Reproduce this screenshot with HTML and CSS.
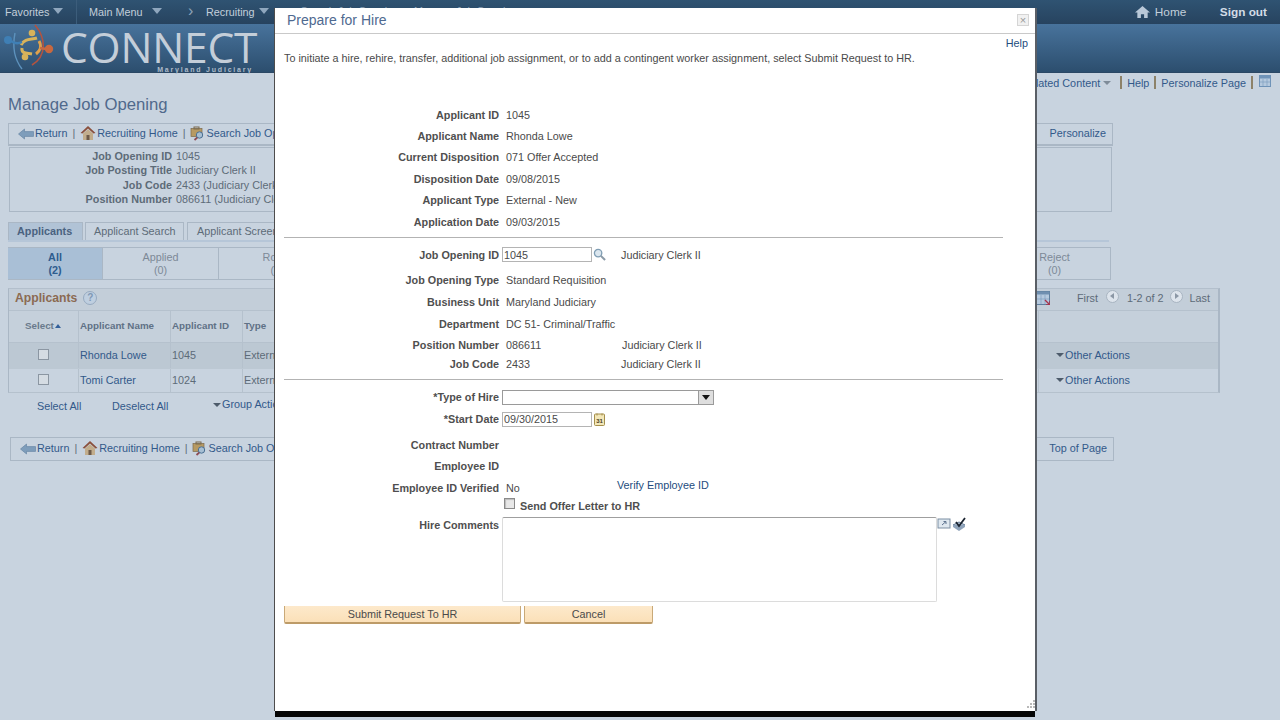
FILE: index.html
```html
<!DOCTYPE html>
<html lang="en">
<head>
<meta charset="utf-8">
<title>Prepare for Hire</title>
<link rel="stylesheet" href="styles.css">
</head>
<body>
<svg class="defs" width="0" height="0" aria-hidden="true">
  <defs>
    <symbol id="house" viewBox="0 0 16 16">
      <path d="M8 1 L0.5 8 L2.5 8.5 L8 3.6 L13.5 8.5 L15.5 8 Z" fill="#8a4f3c"/>
      <path d="M3 8.5 L8 4.2 L13 8.5 V15 H3 Z" fill="#c2ad8c"/>
      <rect x="6.5" y="10" width="3" height="5" fill="#6d5a48"/>
    </symbol>
    <symbol id="back" viewBox="0 0 16 12">
      <path d="M0.5 6 L6.5 1 V3.6 H15.5 V8.4 H6.5 V11 Z" fill="#7e9dbb" stroke="#5f7f9f" stroke-width=".6"/>
    </symbol>
    <symbol id="search-job" viewBox="0 0 15 15">
      <rect x="1" y="2.5" width="11" height="8" fill="#b79a63" stroke="#7b6a4e" stroke-width=".7"/>
      <rect x="4" y="1" width="5" height="2" fill="none" stroke="#7b6a4e"/>
      <circle cx="9.5" cy="9" r="3.2" fill="#a7bfd3" stroke="#4a6f93"/>
      <path d="M7.3 11.5 L4.5 14" stroke="#8c4a52" stroke-width="1.8"/>
    </symbol>
  </defs>
</svg>

<header class="topbar">
  <nav class="nav-left">
    <span class="nav-item nav-fav">Favorites<i class="tri"></i></span>
    <span class="nav-item nav-main">Main Menu<i class="tri"></i></span>
    <span class="nav-chev">&#8250;</span>
    <span class="nav-item nav-rec">Recruiting<i class="tri"></i></span>
    <span class="nav-crumb">Search Job Openings &#8250; Manage Job Opening</span>
  </nav>
  <div class="nav-right">
    <svg class="home-ico" viewBox="0 0 16 14"><path d="M8 0.5 L0 7.5 H2.5 V13.5 H6.3 V9.5 H9.7 V13.5 H13.5 V7.5 H16 Z" fill="#b9c8d8"/></svg>
    <span class="home-txt">Home</span>
    <span class="signout">Sign out</span>
  </div>
</header>

<div class="banner">
  <svg class="logo-mark" viewBox="0 0 56 50">
    <path d="M33 1 C44 14 45 32 30 41" fill="none" stroke="#b3533f" stroke-width="1.6"/>
    <path d="M13 9 C10 24 13 36 20 45" fill="none" stroke="#5d92bd" stroke-width="1.4"/>
    <circle cx="6" cy="16" r="4" fill="#3f7fb5"/>
    <circle cx="47" cy="25" r="4.2" fill="#c8683f"/>
    <circle cx="30" cy="9" r="3.3" fill="#d9b35a"/>
    <circle cx="23" cy="33" r="3.3" fill="#d9b35a"/>
    <path d="M19 21 C23 14 29 16 35 14" fill="none" stroke="#d9b35a" stroke-width="3"/>
    <path d="M20 24 C19 30 25 29 30 30" fill="none" stroke="#d9b35a" stroke-width="3"/>
    <path d="M37 17 C40 22 38 27 34 30" fill="none" stroke="#dfa14c" stroke-width="3"/>
    <path d="M38 24 L44 25" stroke="#c8683f" stroke-width="2.4"/>
    <path d="M9 17 C13 20 16 20 20 18" fill="none" stroke="#3f7fb5" stroke-width="2.4"/>
  </svg>
  <div class="logo-text">
    <span class="logo-name">CONNECT</span>
    <span class="logo-sub">Maryland Judiciary</span>
  </div>
</div>

<main class="page">
  <div class="pagelinks">
    <span class="plink">Related Content<i class="tri-sm"></i></span>
    <span class="psep"></span><span class="plink">Help</span>
    <span class="psep"></span><span class="plink">Personalize Page</span>
    <span class="psep"></span>
    <svg class="cal-ico" viewBox="0 0 12 12"><rect x=".5" y=".5" width="11" height="11" fill="#b5c9de" stroke="#6f93b8"/><rect x=".5" y=".5" width="11" height="3" fill="#6f93b8"/><path d="M4 4V11M8 4V11M1 7H11" stroke="#7f9fc0" stroke-width=".7"/></svg>
  </div>

  <h1 class="page-title">Manage Job Opening</h1>

  <div class="toolbar">
    <span class="tool"><svg class="ti-back"><use href="#back"/></svg>Return</span><span class="bar">|</span>
    <span class="tool"><svg class="ti-house"><use href="#house"/></svg>Recruiting Home</span><span class="bar">|</span>
    <span class="tool"><svg class="ti-search"><use href="#search-job"/></svg>Search Job Openings</span>
    <span class="tool tool-end">Personalize</span>
  </div>

  <div class="infobox">
    <div class="ib-l">Job Opening ID</div><div>1045</div>
    <div class="ib-l">Job Posting Title</div><div>Judiciary Clerk II</div>
    <div class="ib-l">Job Code</div><div>2433 (Judiciary Clerk II)</div>
    <div class="ib-l">Position Number</div><div>086611 (Judiciary Clerk II)</div>
  </div>

  <div class="tabs">
    <span class="tab tab-on">Applicants</span>
    <span class="tab tab-search">Applicant Search</span>
    <span class="tab">Applicant Screening</span>
  </div>

  <div class="status">
    <div class="st st-all">All<br>(2)</div>
    <div class="st st-applied">Applied<br>(0)</div>
    <div class="st st-route">Route<br>(0)</div>
    <div class="st st-reject">Reject<br>(0)</div>
  </div>

  <section class="grid">
    <div class="grid-title">
      <span class="gt-name">Applicants</span>
      <span class="gt-help">?</span>
      <span class="gt-right">
        <svg class="gt-xls" viewBox="0 0 14 14"><rect x=".5" y=".5" width="13" height="13" fill="#b5c9de" stroke="#5f7f9f"/><rect x=".5" y=".5" width="13" height="3" fill="#6f8fb0"/><path d="M5 4V13M9 4V13M1 8H13" stroke="#7f9fc0" stroke-width=".7"/><path d="M9 9 L14 14 M14 10 V14 H10" stroke="#a8324a" stroke-width="1.4" fill="none"/></svg>
        <span class="gt-first">First</span>
        <i class="pg pg-prev"></i>
        <span class="gt-count">1-2 of 2</span>
        <i class="pg pg-next"></i>
        <span>Last</span>
      </span>
    </div>
    <div class="grow ghead">
      <div class="gc gc-sel">Select<i class="sort"></i></div>
      <div class="gc">Applicant Name</div>
      <div class="gc">Applicant ID</div>
      <div class="gc">Type</div>
      <div class="gc gc-last"></div>
    </div>
    <div class="grow gr1">
      <div class="gc gc-chk"><i class="chk"></i></div>
      <div class="gc link">Rhonda Lowe</div>
      <div class="gc">1045</div>
      <div class="gc">External - New</div>
      <div class="gc gc-last link"><i class="tri-dk"></i>Other Actions</div>
    </div>
    <div class="grow gr2">
      <div class="gc gc-chk"><i class="chk"></i></div>
      <div class="gc link">Tomi Carter</div>
      <div class="gc">1024</div>
      <div class="gc">External - New</div>
      <div class="gc gc-last link"><i class="tri-dk"></i>Other Actions</div>
    </div>
  </section>

  <div class="selrow">
    <span class="link sel-all">Select All</span>
    <span class="link sel-none">Deselect All</span>
    <span class="link sel-group"><i class="tri-dk"></i>Group Actions</span>
  </div>

  <div class="toolbar toolbar-b">
    <span class="tool"><svg class="ti-back"><use href="#back"/></svg>Return</span><span class="bar">|</span>
    <span class="tool"><svg class="ti-house"><use href="#house"/></svg>Recruiting Home</span><span class="bar">|</span>
    <span class="tool"><svg class="ti-search"><use href="#search-job"/></svg>Search Job Openings</span>
    <span class="tool tool-end">Top of Page</span>
  </div>
</main>

<div class="modal" role="dialog">
  <div class="m-head">
    <span class="m-title">Prepare for Hire</span>
    <span class="m-close">&#215;</span>
  </div>
  <div class="m-body">
    <div class="m-help"><span class="mlink">Help</span></div>
    <p class="m-intro">To initiate a hire, rehire, transfer, additional job assignment, or to add a contingent worker assignment, select Submit Request to HR.</p>

    <div class="fgroup fg-1">
      <div class="frow h21"><label>Applicant ID</label><span>1045</span></div>
      <div class="frow h21"><label>Applicant Name</label><span>Rhonda Lowe</span></div>
      <div class="frow h22"><label>Current Disposition</label><span>071 Offer Accepted</span></div>
      <div class="frow h21"><label>Disposition Date</label><span>09/08/2015</span></div>
      <div class="frow h22"><label>Applicant Type</label><span>External - New</span></div>
      <div class="frow h21"><label>Application Date</label><span>09/03/2015</span></div>
    </div>
    <hr class="rule rule-1">

    <div class="fgroup">
      <div class="frow h25 row-job"><label>Job Opening ID</label>
        <span class="fval"><input class="txt" type="text" value="1045"><svg class="lens" viewBox="0 0 14 14"><circle cx="5.5" cy="5.5" r="4" fill="#dbe6ee" stroke="#7f9db3" stroke-width="1.4"/><path d="M8.5 8.5 L13 13" stroke="#8a9aa6" stroke-width="2.2"/></svg><span class="desc">Judiciary Clerk II</span></span>
      </div>
      <div class="frow h22"><label>Job Opening Type</label><span>Standard Requisition</span></div>
      <div class="frow h22"><label>Business Unit</label><span>Maryland Judiciary</span></div>
      <div class="frow h21"><label>Department</label><span>DC 51- Criminal/Traffic</span></div>
      <div class="frow h20 row-pos"><label>Position Number</label><span class="fval"><span class="code">086611</span><span class="desc2">Judiciary Clerk II</span></span></div>
      <div class="frow h18"><label>Job Code</label><span class="fval"><span class="code">2433</span><span class="desc3">Judiciary Clerk II</span></span></div>
    </div>
    <hr class="rule rule-2">

    <div class="fgroup">
      <div class="frow h22"><label>*Type of Hire</label>
        <span class="sel"><i class="sel-btn"></i></span>
      </div>
      <div class="frow h22 gap-b"><label>*Start Date</label>
        <span class="fval"><input class="txt" type="text" value="09/30/2015"><svg class="cal" viewBox="0 0 11 13"><rect x=".5" y="1" width="10" height="11.5" rx="1" fill="#f3e7b8" stroke="#a58f4c"/><path d="M3 2.5V.5M8 2.5V.5" stroke="#a58f4c"/><text x="5.5" y="10" class="cal-t" text-anchor="middle">31</text></svg></span>
      </div>
      <div class="frow h21"><label>Contract Number</label></div>
      <div class="frow h22"><label>Employee ID</label></div>
      <div class="frow h22"><label>Employee ID Verified</label>
        <span class="fval"><span class="no">No</span><span class="mlink vlink">Verify Employee ID</span></span>
      </div>
      <div class="frow h16 row-offer"><label></label>
        <span class="offer"><i class="chk2"></i><b>Send Offer Letter to HR</b></span>
      </div>
      <div class="frow comments"><label>Hire Comments</label>
        <span class="fval fval-top"><span class="ta"></span>
          <svg class="ta-exp" viewBox="0 0 14 12"><rect x="1" y="1" width="12" height="9" fill="#dfe8f0" stroke="#7c8fa3"/><path d="M5 7 L9 3.5 M6.5 3.5 H9 V6" stroke="#5f7490" fill="none"/></svg>
          <svg class="ta-spell" viewBox="0 0 14 14"><path d="M1 8 L7 5 L13 8 L7 12 Z" fill="#b8c8da" stroke="#647a94"/><path d="M1 8 V10 L7 14 L13 10 V8" fill="#8fa3ba"/><path d="M4 5 L7 9 L13 1" fill="none" stroke="#1b2430" stroke-width="1.8"/></svg>
        </span>
      </div>
    </div>

    <div class="m-actions">
      <button class="btn btn-submit" type="button">Submit Request To HR</button>
      <button class="btn btn-cancel" type="button">Cancel</button>
    </div>
  </div>
  <svg class="grip" viewBox="0 0 9 9"><path d="M7 0h2v2H7zM4 3h2v2H4zM7 3h2v2H7zM1 6h2v2H1zM4 6h2v2H4zM7 6h2v2H7z" fill="#b9b9b9"/></svg>
</div>
</body>
</html>
```

FILE: styles.css
```css
* { box-sizing: border-box; }
html, body { margin: 0; height: 100%; }
body {
  position: relative;
  width: 1280px;
  height: 720px;
  overflow: hidden;
  background: #c8d3df;
  font-family: "Liberation Sans", Arial, sans-serif;
  font-size: 10.8px;
  color: #5d6b78;
}
.defs { position: absolute; }
i { display: inline-block; font-style: normal; }

/* top navigation */
.topbar {
  height: 24px;
  display: flex;
  justify-content: space-between;
  background: linear-gradient(#2f5372, #27435f);
  color: #c3cfdb;
  font-size: 10.8px;
  line-height: 22px;
}
.nav-left { display: flex; }
.nav-item { display: flex; align-items: center; }
.nav-fav { width: 77px; padding-left: 5px; border-right: 1px solid #3c5d7b; }
.nav-fav .tri { margin-left: 4px; }
.nav-main { margin-left: 12px; width: 99px; }
.nav-main .tri { margin-left: 10px; }
.nav-chev { width: 18px; color: #8ea3b8; font-size: 16px; }
.nav-rec .tri { margin-left: 4px; }
.nav-crumb { margin-left: 32px; height: 8px; overflow: hidden; color: #8ea3b8; white-space: nowrap; }
.tri {
  width: 0; height: 0;
  border-left: 5px solid transparent;
  border-right: 5px solid transparent;
  border-top: 6px solid #8fa7be;
  margin-top: -3px;
}
.nav-right { display: flex; align-items: center; padding-right: 13px; font-size: 11.8px; }
.home-ico { width: 15px; height: 14px; }
.home-txt { margin-left: 5px; width: 65px; }
.signout { font-weight: bold; color: #d3dce6; }

/* banner */
.banner {
  height: 49px;
  display: flex;
  background: linear-gradient(#48739c, #2c4e6e);
  border-bottom: 1px solid #2b4865;
}
.logo-mark { width: 56px; height: 50px; margin-left: 2px; flex: none; }
.logo-text { position: relative; margin-left: 3px; width: 200px; }
.logo-name {
  display: block;
  margin-top: 8px;
  font-family: "Open Sans", sans-serif;
  font-size: 42.5px;
  font-weight: 500;
  line-height: 30px;
  color: #c4ced9;
  letter-spacing: -0.2px;
}
.logo-sub {
  position: absolute;
  right: 8px;
  top: 41px;
  font-size: 7px;
  line-height: 9px;
  font-weight: bold;
  letter-spacing: 1.8px;
  color: #aebbc9;
  white-space: nowrap;
}

/* page */
.page { padding-left: 8px; }
.link { color: #32598a; }
.pagelinks {
  height: 19px;
  display: flex;
  justify-content: flex-end;
  align-items: center;
  padding-right: 9px;
  color: #32598a;
}
.plink { display: flex; align-items: center; }
.tri-sm {
  width: 0; height: 0; margin-left: 3px;
  border-left: 4px solid transparent;
  border-right: 4px solid transparent;
  border-top: 4px solid #7f8c99;
}
.psep { width: 2px; height: 13px; background: #8d8269; margin: 0 5px; }
.plink:first-child + .psep { margin-left: 9px; }
.cal-ico { width: 12px; height: 12px; margin-left: 1px; margin-top: -3px; }
.page-title {
  margin: 0;
  height: 30px;
  padding-top: 3px;
  font-size: 16.7px;
  line-height: 20px;
  font-weight: normal;
  color: #50698c;
}
.toolbar {
  width: 1105px;
  height: 23px;
  display: flex;
  align-items: center;
  padding: 0 6px 2px 9px;
  border: 1px solid #aab7c5;
  border-bottom-width: 2px;
  color: #32598a;
  white-space: nowrap;
  margin-top: 1px;
}
.tool { display: flex; align-items: center; }
.tool-end { margin-left: auto; }
.bar { margin: 0 5px; color: #5d6b78; }
.ti-back { width: 16px; height: 12px; margin-right: 1px; margin-top: 2px; }
.ti-house { width: 16px; height: 16px; margin-right: 1px; }
.ti-search { width: 15px; height: 15px; margin-right: 1px; }
.infobox {
  width: 1103px;
  height: 65px;
  margin: 1px 0 0 1px;
  border: 1px solid #aab7c5;
  padding-top: 1px;
  display: grid;
  grid-template-columns: 162px 1fr;
  column-gap: 4px;
  grid-auto-rows: 14.4px;
  line-height: 14px;
}
.ib-l { text-align: right; font-weight: bold; }
.tabs {
  width: 1101px;
  margin-top: 10px;
  height: 20px;
  display: flex;
  gap: 2px;
  border-bottom: 2px solid #b6c6d8;
  white-space: nowrap;
}
.tab {
  padding: 0 9px;
  line-height: 17px;
  height: 18px;
  border: 1px solid #aab7c5;
  border-bottom: none;
}
.tab-on { width: 75px; font-weight: bold; background: #b1c3d6; color: #4a6280; padding: 0 8px; }
.tab-search { width: 99px; margin-right: 1px; padding: 0 8px; }
.status {
  width: 1103px;
  height: 33px;
  margin-top: 5px;
  display: flex;
  border: 1px solid #aab7c5;
  text-align: center;
  line-height: 12.5px;
}
.st { padding-top: 3px; border-right: 1px solid #aab7c5; color: #7d8997; }
.st-all { width: 95px; background: #a9bfd6; color: #2e5c8e; font-weight: bold; margin-left: -1px; }
.st-applied { width: 116px; }
.st-route { width: 116px; border-right: none; }
.st-reject { margin-left: auto; width: 111px; border-right: none; }

.grid {
  width: 1212px;
  margin-top: 8px;
  border: 1px solid #aab7c5;
  border-top-color: #b3bfcc;
  border-bottom: 1px solid #b5c1cd;
  border-right: 2px solid #aab7c5;
}
.grid-title {
  height: 21px;
  display: flex;
  align-items: center;
  background: #c3ced9;
  padding: 0 0 3px 6px;
}
.gt-name { font-size: 12.2px; font-weight: bold; color: #8b6a52; }
.gt-help {
  width: 14px; height: 14px; margin-left: 6px;
  border: 1px solid #97aac0;
  border-radius: 50%;
  background: #bfcfe0;
  color: #7f98b5;
  font-weight: bold;
  font-size: 10px;
  line-height: 12px;
  text-align: center;
}
.gt-right { margin-left: auto; display: flex; align-items: center; padding-right: 8px; color: #5d6b78; }
.gt-xls { width: 14px; height: 14px; margin-right: 27px; margin-left: -2px; }
.gt-first { margin-right: 8px; }
.gt-count { margin: 0 6px 0 8px; }
.pg {
  width: 13px; height: 13px;
  border-radius: 50%;
  background: #dde4ec;
  border: 1px solid #a8b4c1;
  position: relative;
  margin-top: -4px;
}
.pg-next { margin-right: 7px; }
.pg::after {
  content: "";
  position: absolute; top: 2.5px;
  border-top: 3px solid transparent;
  border-bottom: 3px solid transparent;
}
.pg-prev::after { left: 3px; border-right: 4px solid #8b97a5; }
.pg-next::after { left: 4px; border-left: 4px solid #8b97a5; }
.grow {
  display: grid;
  grid-template-columns: 69px 92px 72px 1fr 180px;
  align-items: stretch;
}
.ghead { height: 32px; padding-bottom: 0; font-weight: bold; font-size: 9.8px; color: #5f7186; background: #c5d0db; border-top: 1px solid #b5c1cd; }
.gr1 { height: 26px; background: #bcc8d3; border-top: 1px solid #b5c1cd; }
.gr2 { height: 24px; background: #c8d3df; border-top: 1px solid #bcc8d3; }
.gc { display: flex; align-items: center; padding-left: 1px; padding-bottom: 2px; border-left: 1px solid #b5c1cd; white-space: nowrap; overflow: hidden; }
.gc:first-child { border-left: none; }
.gc-sel { padding-left: 16px; color: #6a7a8c; }
.gc-chk { justify-content: center; padding-left: 0; }
.gc-last { padding-left: 17px; }
.sort {
  width: 0; height: 0; margin-left: 1px;
  border-left: 3px solid transparent;
  border-right: 3px solid transparent;
  border-bottom: 4px solid #33609a;
}
.chk { width: 11px; height: 11px; background: #d5dce3; border: 1px solid #8b96a2; }
.tri-dk {
  width: 0; height: 0; margin-right: 1px;
  border-left: 4px solid transparent;
  border-right: 4px solid transparent;
  border-top: 4px solid #4d5b6b;
  vertical-align: middle;
}
.selrow { height: 24px; display: flex; align-items: center; margin-top: 1px; }
.sel-all { margin-left: 29px; width: 75px; }
.sel-none { width: 100px; }
.sel-group { margin-left: 1px; margin-top: -5px; }
.toolbar-b { margin: 19px 0 0 2px; width: 1104px; height: 24px; border-bottom-width: 1px; }

/* modal */
.modal {
  position: absolute;
  left: 275px;
  top: 8px;
  width: 760px;
  height: 703px;
  background: #fff;
  box-shadow: -1px 0 0 #4d4d4d, 2px 0 0 #5a5f66, 0 6px 0 #050505;
  color: #4a4a4a;
}
.m-head {
  height: 26px;
  padding: 0 0 2px 12px;
  display: flex;
  align-items: center;
  justify-content: space-between;
  border-bottom: 1px solid #c9c9c9;
}
.m-title { font-size: 14px; color: #4f6a90; }
.m-close {
  width: 12px; height: 12px; margin-right: 6px;
  border: 1px solid #d5d5d5;
  background: #f1f1f1;
  color: #9a9a9a;
  font-size: 11px;
  line-height: 10px;
  text-align: center;
}
.m-body { padding: 0 32px 0 9px; }
.mlink { color: #234c7d; }
.m-help { text-align: right; margin-right: -25px; line-height: 14px; padding-top: 2px; height: 17px; }
.m-intro { margin: 0; line-height: 14px; height: 14px; white-space: nowrap; }
.fg-1 { margin-top: 39px; }
.frow {
  display: grid;
  grid-template-columns: 215px 1fr;
  column-gap: 7px;
  align-items: center;
  white-space: nowrap;
  line-height: 14px;
}
.frow label { text-align: right; font-weight: bold; color: #4f4f4f; }
.h16 { height: 16px; }
.h18 { height: 18px; }
.h20 { height: 20px; }
.h21 { height: 21px; }
.h22 { height: 22px; }
.h25 { height: 25px; }
.row-job { margin-bottom: 2px; }
.row-pos { margin-top: 1px; }
.row-offer { margin-top: -2px; }
.gap-b { margin-bottom: 4px; }
.rule { border: none; border-top: 1px solid #b3b3b3; margin: 0; width: 719px; }
.rule-1 { margin-top: 5px; margin-bottom: 4px; }
.rule-2 { margin-top: 6px; margin-bottom: 6px; }
.fval { display: flex; align-items: center; }
.txt {
  font: inherit;
  color: inherit;
  width: 90px;
  height: 15px;
  padding: 0 1px;
  border: 1px solid #b4b4b4;
  margin-left: -4px;
  background: #fff;
}
.lens { width: 13px; height: 13px; margin-left: 1px; }
.desc { margin-left: 15px; }
.code { width: 116px; }
.desc3 { margin-left: -1px; }
.sel {
  position: relative;
  display: block;
  width: 212px;
  height: 15px;
  margin-left: -4px;
  border: 1px solid #9a9a9a;
}
.sel-btn {
  position: absolute; right: 0; top: 0;
  width: 15px; height: 13px;
  background: #dedede;
  border-left: 1px solid #9a9a9a;
}
.sel-btn::after {
  content: "";
  position: absolute; left: 3px; top: 4px;
  border-left: 4px solid transparent;
  border-right: 4px solid transparent;
  border-top: 5px solid #111;
}
.cal { width: 11px; height: 13px; margin-left: 2px; }
.cal-t { font: bold 6px "Liberation Sans", sans-serif; fill: #443a1c; }
.no { width: 111px; }
.vlink { margin-top: -6px; }
.offer { display: flex; align-items: center; margin-left: -2px; color: #4f4f4f; }
.offer b { margin-left: 5px; margin-top: 1px; }
.chk2 {
  width: 11px; height: 11px; margin-top: -4px;
  background: #e8e8e8;
  border: 1px solid #8a8a8a;
  box-shadow: inset 1px 1px 1px #bbb;
}
.comments { align-items: start; height: 89px; padding-top: 5px; }
.fval-top { align-items: flex-start; margin-top: -1px; }
.ta {
  display: block;
  width: 435px;
  height: 85px;
  margin-left: -4px;
  border: 1px solid #dcdcdc;
  border-top-color: #9f9f9f;
  border-radius: 2px;
}
.ta-exp { width: 14px; height: 12px; margin-top: 1px; }
.ta-spell { width: 14px; height: 14px; margin-left: 1px; }
.m-actions { display: flex; gap: 3px; margin-top: 4px; }
.btn {
  font: inherit;
  color: #4a4a4a;
  height: 18px;
  padding: 0;
  border: 1px solid #c9a978;
  border-top: none;
  border-bottom: 2px solid #bd9b68;
  border-radius: 0 0 2px 2px;
  background: linear-gradient(#fde9cb, #fbe0b8);
}
.btn-submit { width: 237px; }
.btn-cancel { width: 129px; }
.grip { position: absolute; right: 0; bottom: 2px; width: 9px; height: 9px; }
```
